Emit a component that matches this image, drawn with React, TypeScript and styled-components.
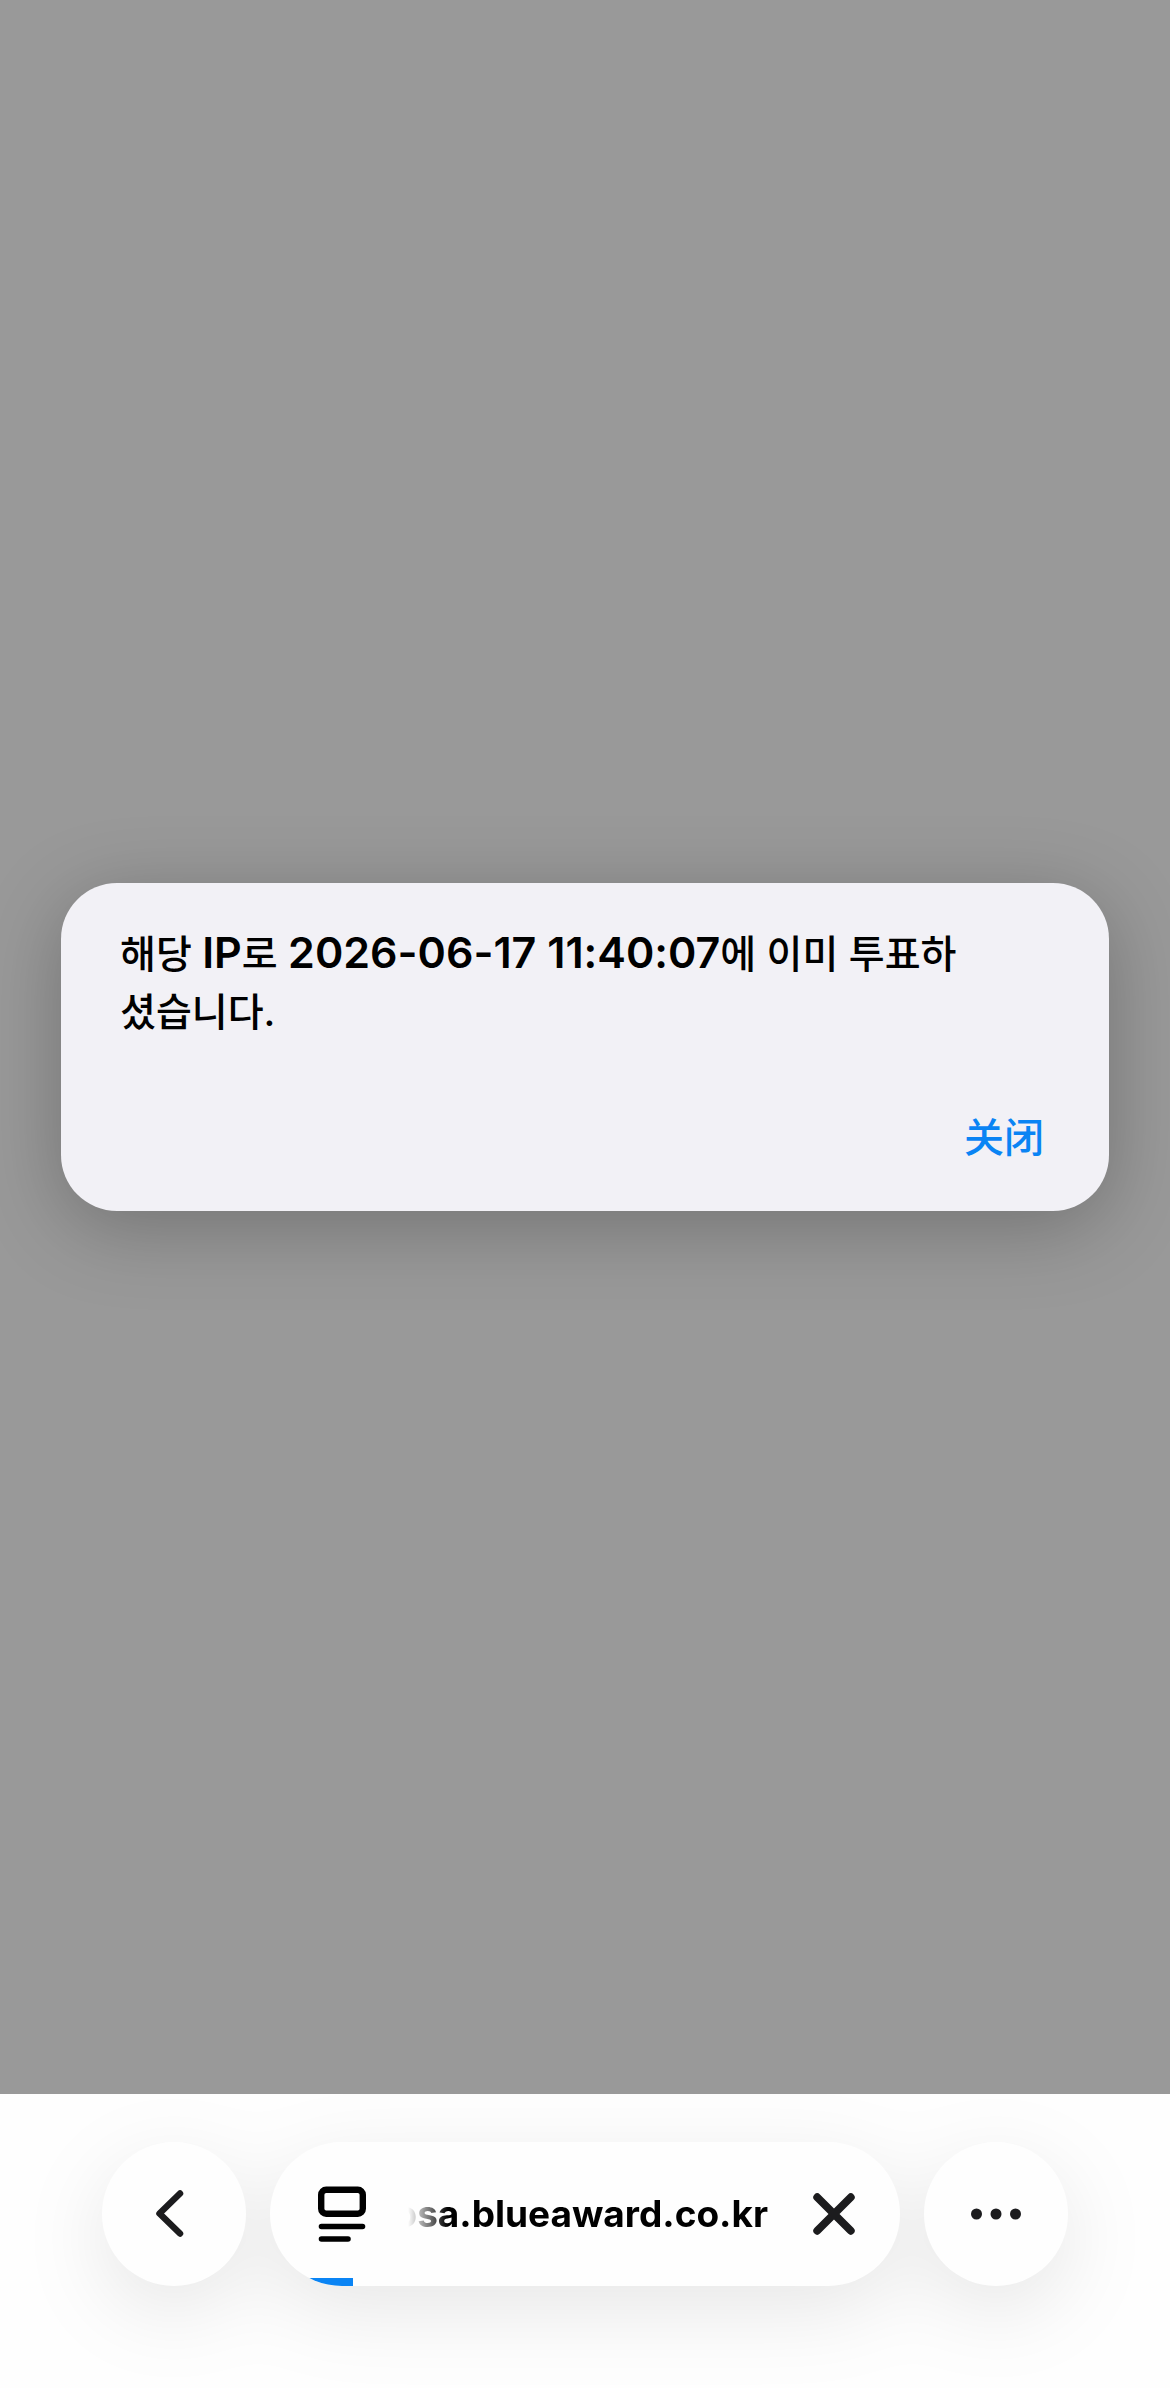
import React, { useState } from 'react';
import styled, { createGlobalStyle } from 'styled-components';

const GlobalStyle = createGlobalStyle`
  *, *::before, *::after { box-sizing: border-box; }
  body {
    margin: 0;
    background: #fdfdfd;
    font-family: Inter, "Noto Sans CJK KR", "Noto Sans CJK SC", sans-serif;
    -webkit-font-smoothing: antialiased;
  }
  button {
    margin: 0;
    padding: 0;
    border: 0;
    background: none;
    font: inherit;
    cursor: pointer;
  }
`;

const Screen = styled.div`
  display: flex;
  flex-direction: column;
  min-height: 100vh;
`;

const Page = styled.main`
  flex: 1;
  display: grid;
  align-items: center;
  padding: 60px;
  background: #999999;
  overflow: hidden;
`;

const Dialog = styled.section`
  display: flex;
  flex-direction: column;
  gap: 62px;
  margin: 0 1px;
  padding: 42px 59px 44px;
  border-radius: 56px;
  background: #f2f1f6;
  box-shadow: 0 16px 80px rgba(0, 0, 0, 0.25);
`;

const Message = styled.p`
  margin: 0;
  padding-right: 64px;
  color: #000;
  font-size: 39px;
  font-weight: 500;
  line-height: 58px;
`;

const Latin = styled.span`
  font-size: 43px;
  font-weight: 600;
  line-height: 1;
`;

const Actions = styled.div`
  display: flex;
  justify-content: flex-end;
`;

const DialogButton = styled.button.attrs({ type: 'button' })`
  padding: 0 6px;
  color: #0a84f4;
  font-family: "Noto Sans CJK SC", sans-serif;
  font-size: 40px;
  font-weight: 500;
  line-height: 64px;
`;

const Toolbar = styled.nav`
  padding: 48px 102px 102px;
  background: #fefefe;
  overflow: hidden;
`;

const ToolbarRow = styled.div`
  display: flex;
  gap: 24px;
  filter: drop-shadow(0 24px 40px rgba(0, 0, 0, 0.09));
`;

const RoundButton = styled.button.attrs({ type: 'button' })`
  display: grid;
  place-items: center;
  flex: none;
  width: 144px;
  height: 144px;
  border-radius: 72px;
  background: #fefefe;
`;

const AddressBar = styled.div`
  position: relative;
  flex: 1;
  min-width: 0;
  display: flex;
  align-items: center;
  height: 144px;
  padding: 0 30px 0 36px;
  border-radius: 72px;
  background: #fefefe;
  overflow: hidden;
`;

const BarButton = styled.button.attrs({ type: 'button' })`
  display: grid;
  place-items: center;
  flex: none;
  width: 72px;
  height: 72px;
`;

const Host = styled.button.attrs({ type: 'button' })`
  flex: 1;
  min-width: 0;
  display: flex;
  justify-content: flex-end;
  margin: 0 30px;
  overflow: hidden;
  color: #000;
  font-size: 37px;
  font-weight: 700;
  line-height: 48px;
  white-space: nowrap;
  mask-image: linear-gradient(to right, transparent, #000 40px);
`;

const Progress = styled.div`
  position: absolute;
  left: 0;
  right: 0;
  bottom: 0;
  height: 8px;
`;

const ProgressFill = styled.div`
  height: 100%;
  background: #0a84f4;
`;

const BackIcon = () => (
  <svg width="48" height="60" viewBox="0 0 48 60" fill="none" stroke="#1c1c1e" strokeWidth="6.5" strokeLinecap="round" strokeLinejoin="round" aria-hidden="true">
    <path d="M30 9.500L9.500 29.500L30 49.500" />
  </svg>
);

const ReaderIcon = () => (
  <svg width="48" height="56" viewBox="0 0 48 56" fill="none" stroke="#000" strokeLinecap="round" aria-hidden="true">
    <rect x="3.200" y="3.800" width="41.600" height="24" rx="5" strokeWidth="6.400" />
    <path d="M3.500 40.500H44.500M3.500 53H30" strokeWidth="5.600" />
  </svg>
);

const CloseIcon = () => (
  <svg width="42" height="42" viewBox="0 0 42 42" fill="none" stroke="#1c1c1e" strokeWidth="7.800" strokeLinecap="round" aria-hidden="true">
    <path d="M4.200 4.200L37.800 37.800M37.800 4.200L4.200 37.800" />
  </svg>
);

const MoreIcon = () => (
  <svg width="50" height="12" viewBox="0 0 50 12" fill="#1c1c1e" aria-hidden="true">
    <circle cx="5.500" cy="6" r="5.500" />
    <circle cx="25" cy="6" r="5.500" />
    <circle cx="44.500" cy="6" r="5.500" />
  </svg>
);

export default function App() {
  const [open, setOpen] = useState(true);
  const progress = 13.2;

  return (
    <Screen>
      <GlobalStyle />
      <Page>
        {open && (
          <Dialog role="alertdialog" aria-describedby="message">
            <Message id="message" lang="ko">
              해당 <Latin>IP</Latin>로 <Latin>2026-06-17 11:40:07</Latin>에 이미 투표하
              <wbr />
              셨습니다.
            </Message>
            <Actions>
              <DialogButton lang="zh-CN" onClick={() => setOpen(false)}>关闭</DialogButton>
            </Actions>
          </Dialog>
        )}
      </Page>
      <Toolbar>
        <ToolbarRow>
          <RoundButton aria-label="Back"><BackIcon /></RoundButton>
          <AddressBar>
            <BarButton aria-label="Reader"><ReaderIcon /></BarButton>
            <Host><span>osa.blueaward.co.kr</span></Host>
            <BarButton aria-label="Stop"><CloseIcon /></BarButton>
            <Progress>
              <ProgressFill style={{ width: `${progress}%` }} />
            </Progress>
          </AddressBar>
          <RoundButton aria-label="More"><MoreIcon /></RoundButton>
        </ToolbarRow>
      </Toolbar>
    </Screen>
  );
}
